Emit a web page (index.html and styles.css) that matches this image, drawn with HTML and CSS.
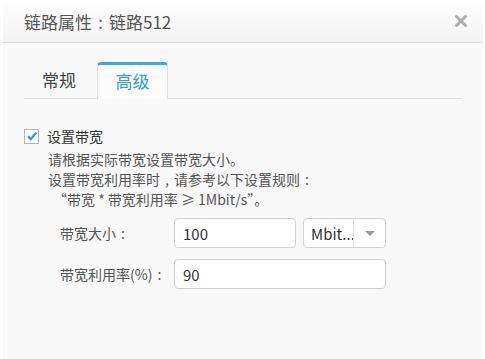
FILE: index.html
```html
<!DOCTYPE html>
<html>
<head>
<meta charset="utf-8">
<link rel="stylesheet" href="styles.css">
</head>
<body>
<div class="dialog">
  <div class="header">
    <span class="title">链路属性<span class="colon">:</span>链路512</span>
    <svg class="close" width="12" height="12" viewBox="0 0 12 12"><path d="M1.5 1.5 L10.5 10.5 M10.5 1.5 L1.5 10.5" stroke="#aeaeae" stroke-width="3" stroke-linecap="round"/></svg>
  </div>
  <div class="body">
    <div class="tabs">
      <div class="tab">常规</div>
      <div class="tab active">高级</div>
    </div>
    <div class="content">
      <label class="check">
        <span class="box"><svg width="12" height="12" viewBox="0 0 12 12"><path d="M2 6.5 L4.8 9.2 L10.2 2.6" fill="none" stroke="#2d8fd5" stroke-width="2.2"/></svg></span>
        <span>设置带宽</span>
      </label>
      <div class="desc">
        <div>请根据实际带宽设置带宽大小。</div>
        <div>设置带宽利用率时<span class="comma">,</span>请参考以下设置规则<span class="colon2">:</span></div>
        <div class="quote">“带宽 * 带宽利用率 ≥ 1Mbit/s”。</div>
      </div>
      <div class="form">
        <div class="row">
          <span class="label">带宽大小<span class="colon2">:</span></span>
          <span class="input short">100</span>
          <span class="select"><span class="sel-text">Mbit...</span><span class="arrow"></span></span>
        </div>
        <div class="row">
          <span class="label">带宽利用率(%)<span class="colon2">:</span></span>
          <span class="input long">90</span>
        </div>
      </div>
    </div>
  </div>
</div>
</body>
</html>
```
FILE: styles.css
```css
html, body {
  margin: 0;
  padding: 0;
  background: #fff;
  font-family: "Noto Sans CJK SC", "Open Sans", sans-serif;
}
.dialog {
  margin: 3px 2px 0 3px;
  height: 356px;
  background: #f9f9f9;
  box-sizing: border-box;
}
.header {
  height: 39px;
  border-bottom: 1px solid #dcdcdc;
  background: linear-gradient(#fdfdfd, #f4f4f4);
  display: flex;
  align-items: center;
  justify-content: space-between;
  padding: 0 16px 0 21px;
}
.title {
  font-size: 17px;
  color: #555;
  line-height: 20px;
  margin-top: -2px;
}
.colon {
  display: inline-block;
  width: 17px;
  text-align: center;
}
.colon2 {
  display: inline-block;
  width: 14px;
  text-align: center;
}
.comma {
  display: inline-block;
  width: 14px;
  text-align: center;
}
.close {
  margin-top: -3px;
}
.body {
  padding: 19px 21px 0 21px;
}
.tabs {
  display: flex;
  gap: 4px;
  border-bottom: 1px solid #e2e2e2;
  height: 36px;
  padding-left: 1px;
}
.tab {
  width: 68px;
  text-align: center;
  font-size: 17px;
  color: #444;
  line-height: 36px;
  box-sizing: border-box;
}
.tab.active {
  width: 71px;
  color: #3a9ad9;
  background: #fcfcfc;
  border: 1px solid #e0e0e0;
  border-top: 3px solid #39a9e6;
  border-bottom: none;
  border-radius: 4px 4px 0 0;
  height: 37px;
  line-height: 32px;
}
.content {
  padding-top: 28px;
}
.check {
  display: flex;
  align-items: center;
  gap: 8px;
  font-size: 14px;
  color: #333;
  line-height: 18px;
}
.box {
  width: 13px;
  height: 13px;
  border: 1px solid #b5b5b5;
  background: #fff;
  display: flex;
  align-items: center;
  justify-content: center;
}
.desc {
  margin-top: 4px;
  padding-left: 24px;
  font-size: 14px;
  color: #555;
  line-height: 20px;
}
.quote {
  padding-left: 5px;
}
.form {
  margin-top: 9px;
  padding-left: 36px;
  display: flex;
  flex-direction: column;
  gap: 11px;
}
.row {
  display: flex;
  align-items: center;
  height: 30px;
}
.label {
  width: 114px;
  font-size: 14px;
  color: #555;
}
.input {
  height: 30px;
  box-sizing: border-box;
  border: 1px solid #d2d2d2;
  border-radius: 4px;
  background: #fff;
  font-size: 15px;
  color: #333;
  padding-left: 8px;
  display: flex;
  align-items: center;
}
.input.short { width: 122px; }
.input.long { width: 212px; }
.select {
  margin-left: 7px;
  width: 83px;
  height: 30px;
  box-sizing: border-box;
  border: 1px solid #d2d2d2;
  border-radius: 4px;
  background: #fff;
  display: flex;
  align-items: center;
}
.sel-text {
  width: 50px;
  box-sizing: border-box;
  padding-left: 7px;
  font-size: 15px;
  color: #333;
  border-right: 1px solid #e0e0e0;
  height: 100%;
  display: flex;
  align-items: center;
  white-space: nowrap;
  overflow: hidden;
}
.arrow {
  flex: 1;
  display: flex;
  justify-content: center;
}
.arrow::before {
  content: "";
  border-left: 5px solid transparent;
  border-right: 5px solid transparent;
  border-top: 5px solid #999;
}
```
